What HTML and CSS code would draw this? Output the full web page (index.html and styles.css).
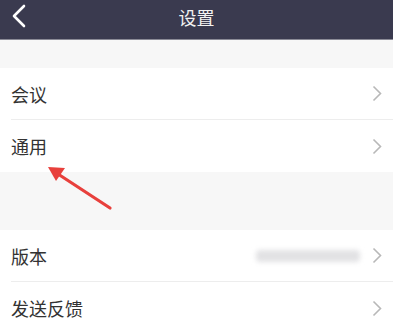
FILE: index.html
```html
<!DOCTYPE html>
<html lang="zh">
<head>
<meta charset="utf-8">
<link rel="stylesheet" href="styles.css">
</head>
<body>
<div class="page">
  <header class="nav">
    <svg class="back" width="16" height="24" viewBox="0 0 16 24"><path d="M13 2 L3 12 L13 22" fill="none" stroke="#fff" stroke-width="2.6" stroke-linecap="round" stroke-linejoin="round"/></svg>
    <div class="title">设置</div>
  </header>
  <div class="gap gap1"></div>
  <div class="group">
    <div class="row"><span class="label">会议</span><span class="right"><svg class="chev" width="10" height="17" viewBox="0 0 10 17"><path d="M1.5 1.5 L8.5 8.5 L1.5 15.5" fill="none" stroke="#b8b8b8" stroke-width="1.6"/></svg></span></div>
    <div class="row"><span class="label">通用</span><span class="right"><svg class="chev" width="10" height="17" viewBox="0 0 10 17"><path d="M1.5 1.5 L8.5 8.5 L1.5 15.5" fill="none" stroke="#b8b8b8" stroke-width="1.6"/></svg></span></div>
  </div>
  <div class="gap gap2"></div>
  <div class="group">
    <div class="row"><span class="label">版本</span><span class="right"><span class="blurred"></span><svg class="chev" width="10" height="17" viewBox="0 0 10 17"><path d="M1.5 1.5 L8.5 8.5 L1.5 15.5" fill="none" stroke="#b8b8b8" stroke-width="1.6"/></svg></span></div>
    <div class="row"><span class="label">发送反馈</span><span class="right"><svg class="chev" width="10" height="17" viewBox="0 0 10 17"><path d="M1.5 1.5 L8.5 8.5 L1.5 15.5" fill="none" stroke="#b8b8b8" stroke-width="1.6"/></svg></span></div>
  </div>
  <svg class="arrow" width="80" height="60" viewBox="0 0 80 60">
    <line x1="18" y1="16" x2="70" y2="50" stroke="#e8403c" stroke-width="3.2" stroke-linecap="round"/>
    <polygon points="8,9 25,10 16,23" fill="#e8403c"/>
  </svg>
</div>
</body>
</html>
```

FILE: styles.css
```css
html, body { margin: 0; padding: 0; }
body {
  font-family: "Noto Sans CJK SC", "Noto Sans", sans-serif;
  background: #f7f7f7;
  width: 393px;
  height: 330px;
  overflow: hidden;
}
.page { position: relative; }
.nav {
  height: 40px;
  background: #3a3a4f;
  display: flex;
  align-items: center;
  justify-content: center;
  position: relative;
  border-bottom: 1px solid #8a8a96;
  box-sizing: border-box;
}
.back { position: absolute; left: 11px; top: 4px; }
.title { color: #f2f2f2; font-size: 18px; line-height: 1; margin-top: -6px; }
.gap1 { height: 28px; }
.gap2 { height: 58px; }
.group { background: #fff; }
.row {
  height: 52px;
  margin-left: 11px;
  padding-right: 11px;
  display: flex;
  align-items: center;
  justify-content: space-between;
  border-bottom: 1px solid #ededed;
  box-sizing: border-box;
}
.row:last-child { border-bottom: none; }
.label { font-size: 18px; color: #333; }
.right { display: flex; align-items: center; gap: 12px; }
.chev { display: block; }
.blurred {
  width: 104px;
  height: 12px;
  background: #e2e2e4;
  filter: blur(2.5px);
  border-radius: 4px;
}
.arrow { position: absolute; left: 40px; top: 158px; }
```
